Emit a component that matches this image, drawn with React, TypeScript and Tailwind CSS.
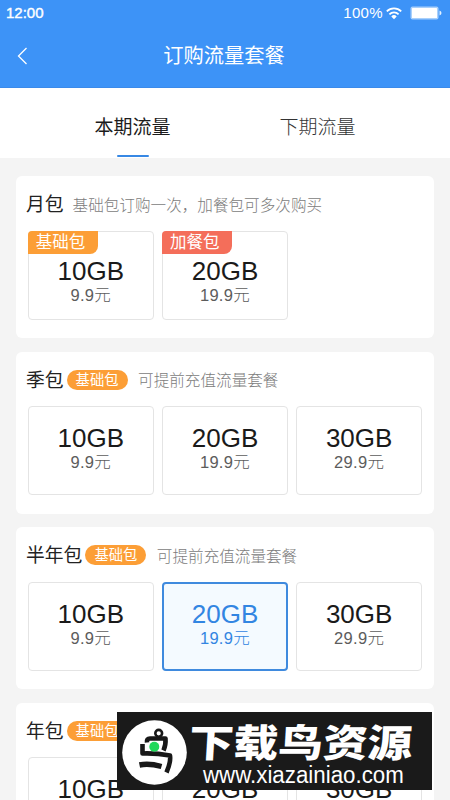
interface Plan {
  size: string;
  price: string;
  tag?: string;
  tagColor?: string;
  selected?: boolean;
}

interface Group {
  title: string;
  badge?: string;
  hint: string;
  plans: Plan[];
}

const threePlans: Plan[] = [
  { size: "10GB", price: "9.9元" },
  { size: "20GB", price: "19.9元" },
  { size: "30GB", price: "29.9元" },
];

const groups: Group[] = [
  {
    title: "月包",
    hint: "基础包订购一次，加餐包可多次购买",
    plans: [
      { size: "10GB", price: "9.9元", tag: "基础包", tagColor: "bg-[#fc9e36]" },
      { size: "20GB", price: "19.9元", tag: "加餐包", tagColor: "bg-[#f46e5a]" },
    ],
  },
  { title: "季包", badge: "基础包", hint: "可提前充值流量套餐", plans: threePlans },
  {
    title: "半年包",
    badge: "基础包",
    hint: "可提前充值流量套餐",
    plans: threePlans.map((p) => ({ ...p, selected: p.size === "20GB" })),
  },
  { title: "年包", badge: "基础包", hint: "可提前充值流量套餐", plans: threePlans },
];

function StatusBar() {
  return (
    <div className="flex h-[26px] items-center justify-between pl-[6px] pr-[8px] text-white">
      <span className="pt-px text-[15px] [-webkit-text-stroke:0.4px_white]">12:00</span>
      <div className="flex items-center">
        <span className="pt-px text-[15px] tracking-[0.35px]">100%</span>
        <svg className="ml-[3px]" width="16" height="13" viewBox="0 0 16 13" fill="none" stroke="currentColor" strokeWidth="1.8">
          <path d="M0.8 4.4a10.3 10.3 0 0 1 14.4 0" />
          <path d="M3.4 7.3a6.6 6.6 0 0 1 9.2 0" />
          <path d="M8 12.2L5.3 9.4a3.9 3.9 0 0 1 5.4 0z" fill="currentColor" stroke="none" />
        </svg>
        <svg className="ml-[8px]" width="32" height="14" viewBox="0 0 32 14">
          <rect x="0.5" y="0.5" width="28" height="13" rx="2" fill="#a9d0fb" />
          <rect x="2" y="2" width="25" height="10" rx="0.5" fill="#fff" />
          <path d="M29.5 4.5q2 0.8 2 2.5t-2 2.5z" fill="#e2f1ff" />
        </svg>
      </div>
    </div>
  );
}

function PlanCard({ plan }: { plan: Plan }) {
  const box = plan.selected
    ? "border-2 border-[#3f8ade] bg-[#f4faff] pt-[17px]"
    : "border border-[#e4e4e4] bg-white";
  const offset = plan.tag ? "pt-[26px]" : plan.selected ? "" : "pt-[18px]";
  return (
    <div className={`relative flex h-[89px] flex-col items-center rounded-[4px] ${box} ${offset}`}>
      {plan.tag && (
        <span
          className={`absolute -left-px -top-px flex h-[23px] w-[70px] items-center justify-center rounded-br-[8px] rounded-tl-[4px] pr-[5px] pt-px text-[16.5px] text-white ${plan.tagColor}`}
        >
          {plan.tag}
        </span>
      )}
      <span className={`text-[26px] leading-[26px] ${plan.selected ? "text-[#3285e2]" : "text-[#1a1a1a]"}`}>
        {plan.size}
      </span>
      <span
        className={`text-[16.5px] font-light leading-[22px] tracking-[0.3px] ${plan.selected ? "text-[#3285e2]" : "text-[#5c5c5c]"}`}
      >
        {plan.price}
      </span>
    </div>
  );
}

function GroupCard({ group }: { group: Group }) {
  return (
    <section className="h-[162px] shrink-0 rounded-[6px] bg-white px-[12px]">
      <div className="flex h-[54.5px] items-center pt-[2px]">
        <h2 className="-ml-[2px] pt-[2px] text-[18.8px] text-[#222]">{group.title}</h2>
        {group.badge && (
          <span className="ml-[3px] mr-[1.5px] flex h-[20px] w-[61px] items-center justify-center rounded-full bg-[#fc9e36] pt-px text-[14.3px] text-white">
            {group.badge}
          </span>
        )}
        <p className="ml-[9px] pt-[2px] text-[15.6px] font-light text-[#7c7c7c]">{group.hint}</p>
      </div>
      <div className="grid grid-cols-3 gap-[8.5px]">
        {group.plans.map((plan) => (
          <PlanCard key={plan.size} plan={plan} />
        ))}
      </div>
    </section>
  );
}

function Watermark() {
  return (
    <div className="absolute left-[117px] top-[712px] flex h-[78px] w-[315px] bg-[#1a1a1a] text-white">
      <svg className="ml-[5px] mt-[8px] shrink-0" width="65" height="66" viewBox="0 0 65 66">
        <circle cx="32.5" cy="32.5" r="32.3" fill="#fff" />
        <g fill="none" stroke="#181818" strokeWidth="4.6" strokeLinejoin="round">
          <circle cx="36.7" cy="13.3" r="3.4" strokeWidth="2.6" />
          <path d="M25 22.5Q24.5 18.5 28 18.5H43.5Q44 25 41.5 30.5" />
          <path d="M20.5 24V33.5Q34 33 48 35.5Q49 42 44.5 52.5" />
          <path d="M17.5 45Q27 43 39.5 46.5" strokeWidth="5.4" />
        </g>
        <circle cx="32.3" cy="26.8" r="5" fill="#20d85a" />
      </svg>
      <div className="ml-[2px] flex flex-col pt-[14px]">
        <span className="h-[36px] w-[195px] origin-left -skew-x-3 scale-x-[1.16] whitespace-nowrap text-[38.5px] font-black leading-[36px]">
          下载鸟资源
        </span>
        <span className="ml-[14px] mt-[3px] origin-bottom scale-y-110 text-[22.3px] leading-[24px]">www.xiazainiao.com</span>
      </div>
    </div>
  );
}

export default function App() {
  return (
    <div className="relative flex h-[800px] w-[450px] flex-col overflow-hidden bg-[#f4f4f4] font-['Liberation_Sans','Noto_Sans_CJK_SC',sans-serif]">
      <header className="h-[88px] shrink-0 border-b border-[#3b8aea] bg-[#3d93f7]">
        <StatusBar />
        <div className="grid h-[59px] grid-cols-[40px_1fr_42px] items-center text-white">
          <svg className="ml-[17px]" width="11" height="18" viewBox="0 0 11 18" fill="none" stroke="currentColor" strokeWidth="1.3">
            <path d="M9.5 1L1.5 9l8 8" />
          </svg>
          <h1 className="pt-px text-center text-[20.3px]">订购流量套餐</h1>
        </div>
      </header>

      <nav className="grid h-[70px] shrink-0 grid-cols-2 bg-white px-[40px] text-[19px]">
        <div className="flex flex-col items-center justify-between pt-[26px] text-[#1c1c1c]">
          <span className="leading-[28px]">本期流量</span>
          <span className="mb-px h-[2.5px] w-[32px] rounded-full bg-[#3788e4]" />
        </div>
        <div className="flex justify-center pt-[26px] font-light text-[#333]">
          <span className="leading-[28px]">下期流量</span>
        </div>
      </nav>

      <main className="flex flex-col gap-[13.5px] px-[16px] pt-[18px]">
        {groups.map((group) => (
          <GroupCard key={group.title} group={group} />
        ))}
      </main>

      <Watermark />
    </div>
  );
}
